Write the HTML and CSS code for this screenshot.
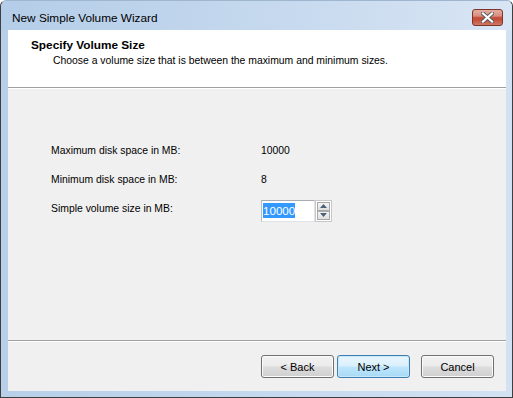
FILE: index.html
```html
<!DOCTYPE html>
<html lang="en">
<head>
    <meta charset="UTF-8">
    <title>New Simple Volume Wizard</title>
    <link rel="stylesheet" href="styles.css">
</head>
<body>
    <div class="window">
        <div class="titlebar">
            <span class="title">New Simple Volume Wizard</span>
            <div class="close-button">
                <svg width="13" height="11" viewBox="0 0 13 11">
                    <path d="M2 1.5 L11 9.5 M11 1.5 L2 9.5" stroke="#5a5a5a" stroke-width="4" stroke-linecap="square" fill="none"/>
                    <path d="M2 1.5 L11 9.5 M11 1.5 L2 9.5" stroke="#ffffff" stroke-width="2.2" stroke-linecap="square" fill="none"/>
                </svg>
            </div>
        </div>

        <div class="client">
            <div class="header">
                <div class="header-title">Specify Volume Size</div>
                <div class="header-subtitle">Choose a volume size that is between the maximum and minimum sizes.</div>
            </div>

            <div class="content">
                <div class="field-row">
                    <span class="field-label">Maximum disk space in MB:</span>
                    <span class="field-value">10000</span>
                </div>
                <div class="field-row">
                    <span class="field-label">Minimum disk space in MB:</span>
                    <span class="field-value">8</span>
                </div>
                <div class="field-row">
                    <span class="field-label">Simple volume size in MB:</span>
                    <div class="spin-edit">
                        <div class="edit-box"><span class="selected">10000</span></div>
                        <div class="spinner">
                            <div class="spin-btn">
                                <svg width="7" height="4" viewBox="0 0 7 4"><path d="M0 4 L3.5 0 L7 4 Z" fill="#4c607a"/></svg>
                            </div>
                            <div class="spin-btn">
                                <svg width="7" height="4" viewBox="0 0 7 4"><path d="M0 0 L7 0 L3.5 4 Z" fill="#4c607a"/></svg>
                            </div>
                        </div>
                    </div>
                </div>
            </div>

            <div class="footer">
                <button class="wiz-button">&lt; Back</button>
                <button class="wiz-button default-button">Next &gt;</button>
                <button class="wiz-button cancel-button">Cancel</button>
            </div>
        </div>
    </div>
</body>
</html>
```

FILE: styles.css
```css
body {
    margin: 0;
    padding: 0;
    background-color: #ffffff;
    font-family: "Liberation Sans", Arial, sans-serif;
    font-size: 10.4px;
    color: #000;
}
.window {
    width: 513px;
    height: 398px;
    box-sizing: border-box;
    border: 1px solid #3f3f3f;
    border-top-color: #9fb6cf;
    border-radius: 6px 6px 0 0;
    background: linear-gradient(to right, #b7cfe9 0%, #c4d8ee 50%, #d3e2f3 100%);
    display: flex;
    flex-direction: column;
}
.titlebar {
    height: 29px;
    display: flex;
    justify-content: space-between;
    align-items: flex-start;
    padding-left: 11px;
    padding-right: 9px;
    background: linear-gradient(to right, #b4cde8 0%, #c6d9ee 55%, #d8e5f4 100%);
    border-radius: 6px 6px 0 0;
}
.title {
    font-size: 11.8px;
    line-height: 15px;
    padding-top: 10px;
    color: #000;
}
.close-button {
    margin-top: 8px;
    width: 31px;
    height: 17px;
    box-sizing: border-box;
    border: 1px solid #7f3329;
    border-radius: 3px;
    background: linear-gradient(to bottom, #e3ada2 0%, #d68f80 40%, #c8523e 50%, #c24a37 60%, #d07866 100%);
    display: flex;
    align-items: center;
    justify-content: center;
}
.close-button svg {
    display: block;
}
.client {
    margin: 0 6px 6px 7px;
    height: 361px;
    display: flex;
    flex-direction: column;
    background: #f0f0f0;
}
.header {
    height: 58px;
    box-sizing: border-box;
    background: #ffffff;
    padding: 8px 0 0 23px;
    border-bottom: 1px solid #a0a0a0;
}
.header-title {
    font-weight: bold;
    font-size: 11.8px;
    line-height: 14px;
}
.header-subtitle {
    margin-top: 2px;
    padding-left: 22px;
    line-height: 14px;
}
.content {
    height: 253px;
    box-sizing: border-box;
    padding: 47px 0 0 43px;
    border-top: 1px solid #ffffff;
    border-bottom: 1px solid #a0a0a0;
}
.field-row {
    display: flex;
    align-items: center;
    height: 29px;
}
.field-label {
    width: 210px;
    line-height: 13px;
}
.field-value {
    line-height: 13px;
}
.spin-edit {
    display: flex;
    margin-top: 4px;
}
.edit-box {
    width: 54px;
    height: 22px;
    box-sizing: border-box;
    background: #ffffff;
    border: 1px solid #dfe3e8;
    border-top-color: #a9acb2;
    border-left-color: #b8bcc3;
    padding: 2px 0 0 1px;
}
.selected {
    display: inline-block;
    background: #3399ff;
    color: #ffffff;
    line-height: 15px;
    font-size: 11.6px;
}
.spinner {
    width: 17px;
    height: 22px;
    box-sizing: border-box;
    border: 1px solid #c8c8c8;
    background: #ffffff;
    display: flex;
    flex-direction: column;
    justify-content: space-between;
    padding: 1px;
}
.spin-btn {
    height: 9px;
    box-sizing: border-box;
    border: 1px solid #a9a9a9;
    background: linear-gradient(to bottom, #f5f5f5, #dedede);
    display: flex;
    align-items: center;
    justify-content: center;
}
.spin-btn svg {
    display: block;
}
.footer {
    flex: 1;
    border-top: 1px solid #ffffff;
    display: flex;
    justify-content: flex-end;
    align-items: flex-start;
    padding: 13px 12px 0 0;
}
.wiz-button {
    width: 73px;
    height: 23px;
    box-sizing: border-box;
    margin-left: 3px;
    padding: 0;
    font-family: "Liberation Sans", Arial, sans-serif;
    font-size: 11px;
    color: #000;
    border: 1px solid #707070;
    border-radius: 3px;
    background: linear-gradient(to bottom, #f2f2f2 0%, #ebebeb 48%, #dddddd 52%, #cfcfcf 100%);
    box-shadow: inset 0 0 0 1px #fbfbfb;
}
.default-button {
    border-color: #3c7fb1;
    background: linear-gradient(to bottom, #eaf6fd 0%, #d9f0fc 48%, #bee6fd 52%, #a7d9f5 100%);
    box-shadow: inset 0 0 0 1px #c9e8fb;
}
.cancel-button {
    margin-left: 11px;
}
```
